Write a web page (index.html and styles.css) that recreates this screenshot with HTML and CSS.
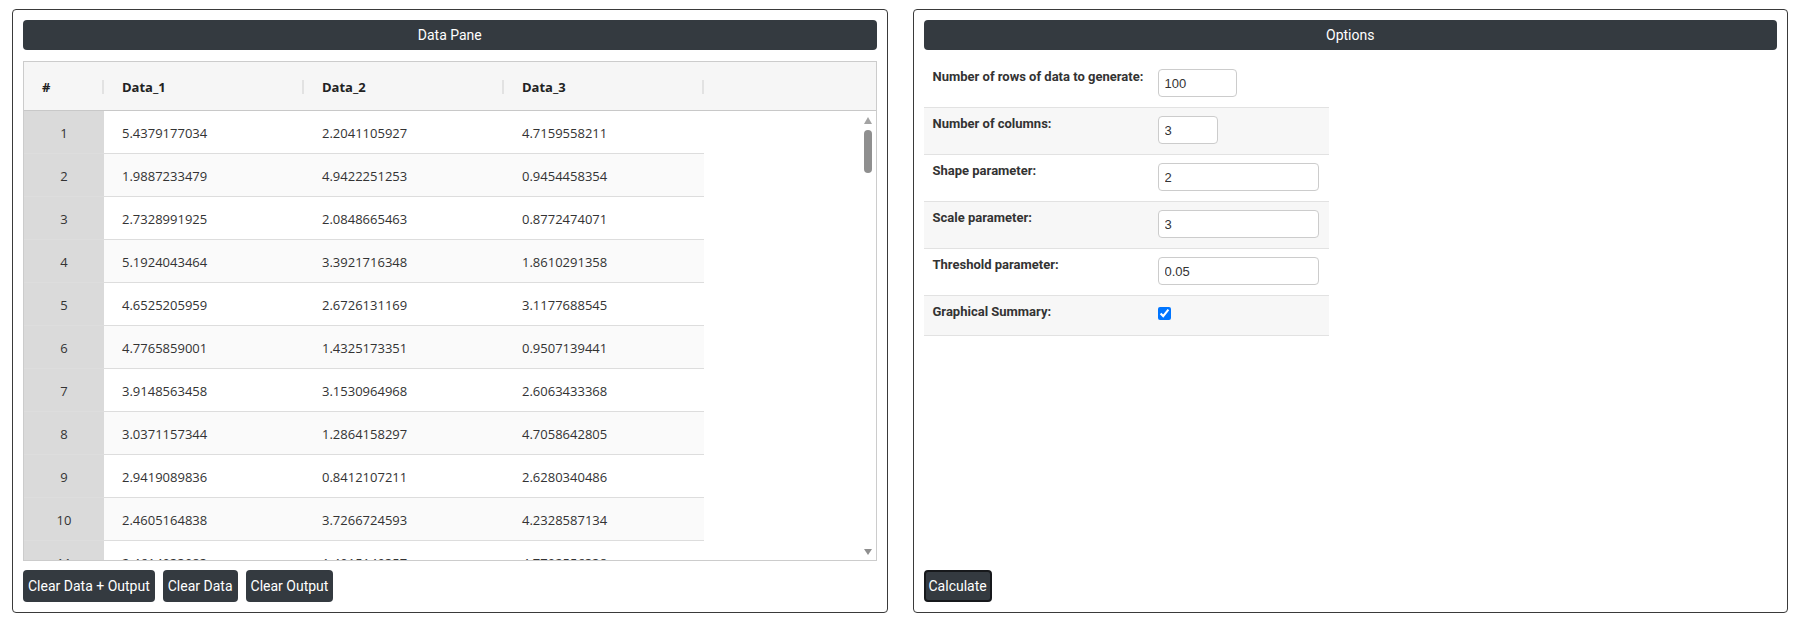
FILE: index.html
```html
<!DOCTYPE html>
<html lang="en">
<head>
    <meta charset="UTF-8">
    <meta name="viewport" content="width=device-width, initial-scale=1.0">
    <title>Data Pane</title>
    <link rel="stylesheet" href="styles.css">
</head>
<body>
    <!-- Data Pane -->
    <div class="panel">
        <div class="pane-title">Data Pane</div>

        <div class="grid">
            <div class="grid-head">
                <div class="head-cell head-num">#</div>
                <div class="head-cell">Data_1</div>
                <div class="head-cell">Data_2</div>
                <div class="head-cell">Data_3</div>
            </div>
            <div class="grid-body">
                <div class="rows">
                    <div class="row"><div class="num">1</div><div class="cell">5.4379177034</div><div class="cell">2.2041105927</div><div class="cell">4.7159558211</div></div>
                    <div class="row"><div class="num">2</div><div class="cell">1.9887233479</div><div class="cell">4.9422251253</div><div class="cell">0.9454458354</div></div>
                    <div class="row"><div class="num">3</div><div class="cell">2.7328991925</div><div class="cell">2.0848665463</div><div class="cell">0.8772474071</div></div>
                    <div class="row"><div class="num">4</div><div class="cell">5.1924043464</div><div class="cell">3.3921716348</div><div class="cell">1.8610291358</div></div>
                    <div class="row"><div class="num">5</div><div class="cell">4.6525205959</div><div class="cell">2.6726131169</div><div class="cell">3.1177688545</div></div>
                    <div class="row"><div class="num">6</div><div class="cell">4.7765859001</div><div class="cell">1.4325173351</div><div class="cell">0.9507139441</div></div>
                    <div class="row"><div class="num">7</div><div class="cell">3.9148563458</div><div class="cell">3.1530964968</div><div class="cell">2.6063433368</div></div>
                    <div class="row"><div class="num">8</div><div class="cell">3.0371157344</div><div class="cell">1.2864158297</div><div class="cell">4.7058642805</div></div>
                    <div class="row"><div class="num">9</div><div class="cell">2.9419089836</div><div class="cell">0.8412107211</div><div class="cell">2.6280340486</div></div>
                    <div class="row"><div class="num">10</div><div class="cell">2.4605164838</div><div class="cell">3.7266724593</div><div class="cell">4.2328587134</div></div>
                    <div class="row"><div class="num">11</div><div class="cell">2.4614033083</div><div class="cell">1.4015149357</div><div class="cell">4.7702556338</div></div>
                </div>

                <!-- scrollbar -->
                <div class="scrollbar">
                    <div class="arrow-up"></div>
                    <div class="thumb"></div>
                    <div class="arrow-down"></div>
                </div>
            </div>
        </div>

        <div class="actions">
            <button class="btn">Clear Data + Output</button>
            <button class="btn">Clear Data</button>
            <button class="btn">Clear Output</button>
        </div>
    </div>

    <!-- Options -->
    <div class="panel">
        <div class="pane-title">Options</div>

        <div class="options">
            <div class="opt-row">
                <label class="opt-label" for="nrows">Number of rows of data to generate:</label>
                <input type="text" id="nrows" class="opt-input w-md" value="100">
            </div>
            <div class="opt-row">
                <label class="opt-label" for="ncols">Number of columns:</label>
                <input type="text" id="ncols" class="opt-input w-sm" value="3">
            </div>
            <div class="opt-row">
                <label class="opt-label" for="shape">Shape parameter:</label>
                <input type="text" id="shape" class="opt-input w-lg" value="2">
            </div>
            <div class="opt-row">
                <label class="opt-label" for="scale">Scale parameter:</label>
                <input type="text" id="scale" class="opt-input w-lg" value="3">
            </div>
            <div class="opt-row">
                <label class="opt-label" for="threshold">Threshold parameter:</label>
                <input type="text" id="threshold" class="opt-input w-lg" value="0.05">
            </div>
            <div class="opt-row opt-last">
                <label class="opt-label" for="summary">Graphical Summary:</label>
                <input type="checkbox" id="summary" class="opt-check" checked>
            </div>
        </div>

        <button class="btn btn-calc">Calculate</button>
    </div>
</body>
</html>
```

FILE: styles.css
```css
/* General Styles */
body {
    margin: 0;
    padding: 9px 22px 0 12px;
    display: flex;
    gap: 25px;
    font-family: Roboto, "Liberation Sans", sans-serif;
    color: #333;
    background-color: #fff;
}

.panel {
    flex: 1;
    min-width: 0;
    height: 604px;
    box-sizing: border-box;
    border: 1px solid #3a3a3a;
    border-radius: 4px;
    padding: 10px;
    display: flex;
    flex-direction: column;
}

.pane-title {
    height: 30px;
    line-height: 30px;
    background-color: #343a40;
    color: #fff;
    border-radius: 4px;
    text-align: center;
    font-size: 14px;
}

/* Data grid */
.grid {
    margin-top: 11px;
    height: 500px;
    box-sizing: border-box;
    border: 1px solid #ccc;
    display: flex;
    flex-direction: column;
    font-family: "Open Sans", "Liberation Sans", sans-serif;
    font-size: 13px;
    color: #333;
}

.grid-head {
    height: 49px;
    flex-shrink: 0;
    box-sizing: border-box;
    padding-top: 2px;
    border-bottom: 1px solid #c8c8c8;
    background-color: #f6f6f6;
    display: flex;
    align-items: center;
    font-weight: bold;
    color: #222;
}

.head-cell {
    width: 200px;
    height: 14px;
    line-height: 14px;
    box-sizing: border-box;
    padding-left: 18px;
    border-right: 2px solid #e2e2e2;
}

.head-cell.head-num {
    width: 80px;
    padding-left: 18px;
}

.grid-body {
    flex: 1;
    display: flex;
    overflow: hidden;
}

.rows {
    width: 680px;
    overflow: hidden;
}

.row {
    display: flex;
    align-items: center;
    height: 43px;
    box-sizing: border-box;
    padding-top: 2px;
    border-bottom: 1px solid #ddd;
    background-color: #fff;
}

.row:nth-child(even) {
    background-color: #fafafa;
}

.num {
    width: 80px;
    align-self: stretch;
    margin-top: -2px;
    padding-top: 2px;
    display: flex;
    align-items: center;
    justify-content: center;
    background-color: #dadada;
}

.cell {
    width: 200px;
    box-sizing: border-box;
    padding-left: 18px;
}

.scrollbar {
    margin-left: auto;
    width: 15px;
    box-sizing: border-box;
    padding: 6px 0 5px;
    display: flex;
    flex-direction: column;
    align-items: center;
}

.arrow-up {
    width: 0;
    height: 0;
    border-left: 4px solid transparent;
    border-right: 4px solid transparent;
    border-bottom: 7px solid #a3a3a3;
}

.thumb {
    margin-top: 6px;
    width: 8px;
    height: 43px;
    border-radius: 4px;
    background-color: #8f8f8f;
}

.arrow-down {
    margin-top: auto;
    width: 0;
    height: 0;
    border-left: 4px solid transparent;
    border-right: 4px solid transparent;
    border-top: 6px solid #8f8f8f;
}

/* Buttons */
.actions {
    margin-top: 9px;
    display: flex;
    gap: 8px;
}

.btn {
    height: 32px;
    padding: 0 5px;
    background-color: #343a40;
    color: #fff;
    border: none;
    border-radius: 4px;
    font-family: Roboto, "Liberation Sans", sans-serif;
    font-size: 14px;
    cursor: pointer;
}

.btn-calc {
    margin-top: auto;
    align-self: flex-start;
    padding: 0 3px;
    border: 2px solid #17191c;
}

/* Options */
.options {
    margin-top: 11px;
    width: 405px;
    font-size: 13px;
}

.opt-row {
    display: flex;
    align-items: flex-start;
    height: 47px;
    box-sizing: border-box;
    padding-top: 8px;
    border-bottom: 1px solid #e2e2e2;
}

.opt-row:nth-child(even) {
    background-color: #f7f7f7;
}

.opt-row.opt-last {
    height: 40px;
}

.opt-label {
    width: 234px;
    box-sizing: border-box;
    padding-left: 9px;
    font-weight: bold;
    color: #333;
}

.opt-input {
    height: 28px;
    box-sizing: border-box;
    padding: 0 6px;
    border: 1px solid #ccc;
    border-radius: 4px;
    font-family: "Liberation Sans", Arial, sans-serif;
    font-size: 13px;
    color: #333;
}

.w-sm { width: 60px; }
.w-md { width: 79px; }
.w-lg { width: 161px; }

.opt-check {
    width: 13px;
    height: 13px;
    margin: 3px 0 0 0;
}
```
